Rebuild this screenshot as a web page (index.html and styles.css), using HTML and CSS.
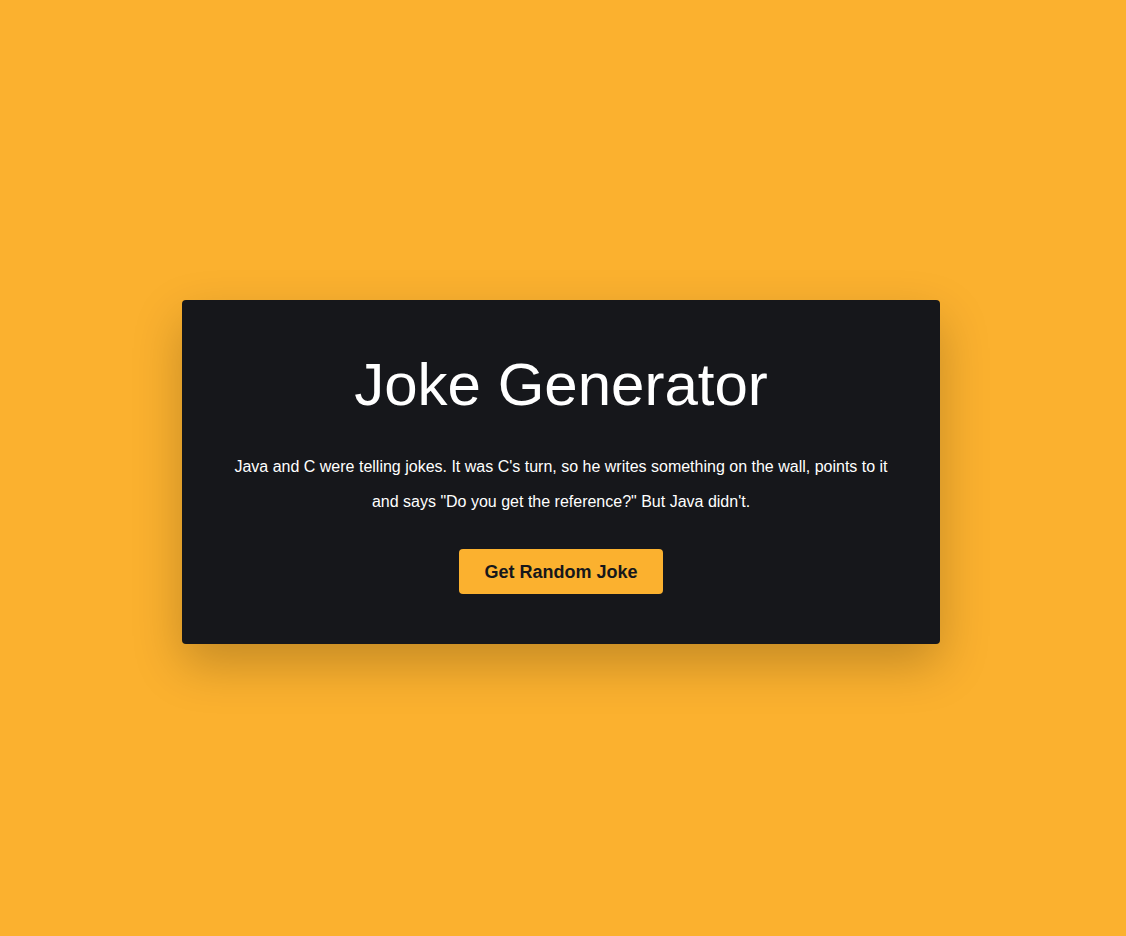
FILE: index.html
```html
<!DOCTYPE html>
<html lang="en">
<head>
<meta charset="UTF-8">
<title>Joke Generator</title>
<link rel="stylesheet" href="styles.css">
</head>
<body>
<main class="page">
  <section class="card">
    <h1 class="title">Joke Generator</h1>
    <p class="joke">Java and C were telling jokes. It was C's turn, so he writes something on the wall, points to it and says "Do you get the reference?" But Java didn't.</p>
    <button class="btn" type="button">Get Random Joke</button>
  </section>
</main>
</body>
</html>
```

FILE: styles.css
```css
* { box-sizing: border-box; }
html, body { margin: 0; padding: 0; }
body {
  background: #fbb12f;
  font-family: "Liberation Sans", Arial, sans-serif;
  color: #ffffff;
}
.page {
  min-height: 936px;
  display: flex;
  align-items: center;
  justify-content: center;
  padding: 8px 4px 0 0;
}
.card {
  width: 758px;
  background: #16171b;
  border-radius: 4px;
  box-shadow: 0 20px 50px rgba(0, 0, 0, 0.22);
  padding: 50px 50px 50px;
  text-align: center;
}
.title {
  margin: 0;
  font-size: 60px;
  font-weight: 400;
  line-height: 69px;
}
.joke {
  margin: 30px 0 30px;
  font-size: 16px;
  line-height: 35px;
}
.btn {
  background: #fbb12f;
  color: #16171b;
  border: none;
  border-radius: 4px;
  padding: 13px 25px 12px;
  font-family: "Liberation Sans", Arial, sans-serif;
  font-size: 18px;
  font-weight: 700;
  line-height: 20px;
  cursor: pointer;
}
```
